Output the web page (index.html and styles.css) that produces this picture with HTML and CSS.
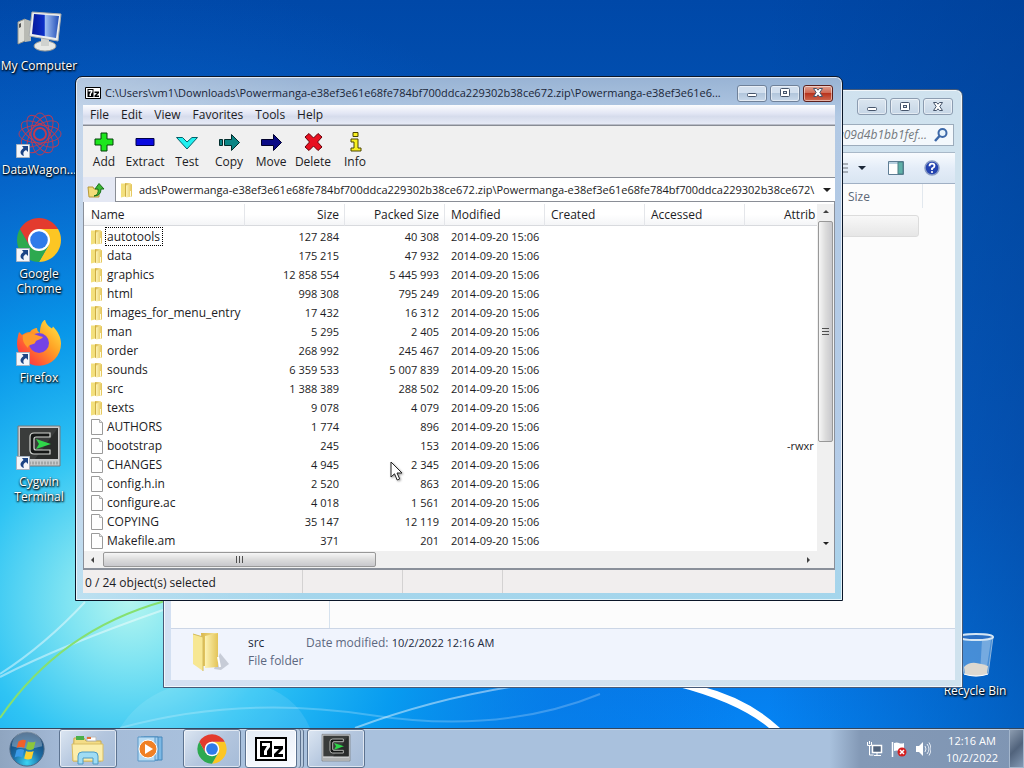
FILE: index.html
```
<!DOCTYPE html>
<html lang="en">
<head>
    <meta charset="UTF-8">
    <meta name="viewport" content="width=device-width, initial-scale=1.0">
    <title>Desktop</title>
    <link rel="stylesheet" href="styles.css">
</head>
<body>
    <!-- shared icons -->
    <svg class="defs" aria-hidden="true">
        <defs>
            <linearGradient id="gold" x1="0" x2="1"><stop offset="0" stop-color="#fdf3b4"/><stop offset="1" stop-color="#e3c458"/></linearGradient>
            <linearGradient id="gold2" x1="0" x2="1"><stop offset="0" stop-color="#d9b74c"/><stop offset="1" stop-color="#f8e9a0"/></linearGradient>
            <linearGradient id="screen" x1="0" x2="1"><stop offset="0" stop-color="#061a9c"/><stop offset=".45" stop-color="#0b2fc8"/><stop offset=".5" stop-color="#9dbcf2"/><stop offset="1" stop-color="#2450b8"/></linearGradient>
            <linearGradient id="fox" x1="1" y1="0" x2="0" y2="1"><stop offset="0" stop-color="#fff04a"/><stop offset=".4" stop-color="#ffa326"/><stop offset=".75" stop-color="#ff4f37"/><stop offset="1" stop-color="#e6256e"/></linearGradient>
            <radialGradient id="orb" cx=".5" cy=".9" r=".9"><stop offset="0" stop-color="#3ad6f4"/><stop offset=".45" stop-color="#1c6da6"/><stop offset="1" stop-color="#123a66"/></radialGradient>
            <symbol id="folder" viewBox="0 0 16 16">
                <path d="M2 1.500h4v13l-4 1z" fill="#f3e07c"/>
                <path d="M6 1h6v13H6z" fill="url(#gold2)"/>
                <path d="M7 3.500 13 2v12.500l-6 1z" fill="url(#gold)"/>
                <path d="M6.500 2v13" stroke="#c9a840" stroke-width=".8"/>
                <path d="M11.500 9v5.500" stroke="#fffbe0"/>
            </symbol>
            <symbol id="file" viewBox="0 0 16 16">
                <path d="M2.500.5h8l3 3v12h-11z" fill="#fefefe" stroke="#9a9a9a"/>
                <path d="M10.500.5v3h3" fill="#e8e8e8" stroke="#b0b0b0"/>
            </symbol>
            <symbol id="shortcut" viewBox="0 0 14 14">
                <path d="M.5.5h13v13H.5z" fill="#f4f6fa" stroke="#a9b4c2"/>
                <path d="M6 2h6v6l-2-2c-3 2-3 3-2 6C4 11 3 7 7.500 4z" fill="#1c4485"/>
            </symbol>
            <symbol id="chrome" viewBox="0 0 48 48">
                <path d="M24 13h19.050A22 22 0 0 1 24 46l9.500-16.500z" fill="#fcc624"/>
                <path d="M4.950 13A22 22 0 0 0 24 46l9.500-16.500h-19z" fill="#2da94f"/>
                <path d="M4.950 13A22 22 0 0 1 43.050 13H24l-9.500 16.500z" fill="#e33b2e"/>
                <circle cx="24" cy="24" r="11" fill="#fff"/>
                <circle cx="24" cy="24" r="8.800" fill="#2f7bea"/>
            </symbol>
            <symbol id="cygwin" viewBox="0 0 48 48">
                <path d="M3 2h42v40H3z" fill="#c9cbcc" stroke="#77797a"/>
                <path d="M5 4h38v31H5z" fill="#3a3c3b"/>
                <path d="M43 4v31H20z" fill="#2a2c2b"/>
                <path d="M35 9H19q-4 0-4 4v13q0 4 4 4h16v-4H21q-2 0-2-2v-9q0-2 2-2h14z" fill="#151716" stroke="#d4d6d2" stroke-width="1.200"/>
                <path d="M21 15l15 5-15 5 3-5z" fill="#2fd64a"/>
                <path d="M5 39h38" stroke="#a4a7a7" stroke-dasharray="2 1" stroke-width="3"/>
            </symbol>
            <symbol id="sevenzip" viewBox="0 0 32 24">
                <path d="M1 1h30v22H1z" fill="#fff" stroke="#000" stroke-width="2"/>
                <path d="M5 4h12v16H5z" fill="#000"/>
                <path d="M7 6h8v4l-3 4v4H9v-4l3-5H7z" fill="#fff"/>
                <path d="M19 9h9v3l-5 5h5v3h-9v-3l5-5h-5z" fill="#000"/>
            </symbol>
            <symbol id="min" viewBox="0 0 16 12"><rect x="3.500" y="6.500" width="9" height="3" rx="1" fill="#fff" stroke="#46556b"/></symbol>
            <symbol id="max" viewBox="0 0 16 12"><rect x="3.500" y="1.500" width="9" height="8" rx="1" fill="#fff" stroke="#46556b"/><rect x="6.500" y="4.500" width="3" height="2" fill="#dfe6ef" stroke="#46556b"/></symbol>
            <symbol id="close" viewBox="0 0 16 12"><path d="M3.500 1.500h3L8 3.200l1.500-1.700h3L9.800 5.500l2.700 4h-3L8 7.800 6.500 9.500h-3l2.700-4z" fill="#fff" stroke="#46556b"/></symbol>
        </defs>
    </svg>

    <main class="desktop">
        <svg class="wallpaper" viewBox="0 0 1024 728" preserveAspectRatio="none" aria-hidden="true">
            <defs>
                <linearGradient id="sky" x1="0" y1="0" x2="0" y2="1">
                    <stop offset="0" stop-color="#0048a8"/><stop offset=".3" stop-color="#0458ba"/><stop offset=".65" stop-color="#0863cc"/><stop offset="1" stop-color="#0584f4"/>
                </linearGradient>
                <radialGradient id="glow" gradientUnits="userSpaceOnUse" cx="130" cy="600" r="620">
                    <stop offset="0" stop-color="#b4f6f0"/><stop offset=".1" stop-color="#80e4f2"/><stop offset=".25" stop-color="#2fc4f4"/><stop offset=".45" stop-color="#08a0f0" stop-opacity=".85"/><stop offset=".7" stop-color="#0878e0" stop-opacity=".45"/><stop offset="1" stop-color="#0860d0" stop-opacity="0"/>
                </radialGradient>
                <linearGradient id="shade" x1="0" x2="1"><stop offset=".75" stop-color="#003c90" stop-opacity="0"/><stop offset="1" stop-color="#003c90" stop-opacity=".5"/></linearGradient>
            </defs>
            <path d="M0 0h1024v728H0z" fill="url(#sky)"/>
            <path d="M0 0h1024v728H0z" fill="url(#glow)"/>
            <path d="M0 0h1024v728H0z" fill="url(#shade)"/>
            <path d="M120 728Q150 680 220 680T310 728z" fill="#fff" opacity=".1"/>
            <g fill="none">
                <path d="M0 677Q60 646 163 610M0 674Q45 645 85 602" stroke="#fff" stroke-width="2" opacity=".45"/>
                <path d="M0 718Q60 630 165 601" stroke="#86e070" stroke-width="2"/>
                <path d="M120 728Q240 695 370 715T600 694" stroke="#fff" stroke-width="2" opacity=".22"/>
                <path d="M355 728Q430 700 510 687" stroke="#fff" stroke-width="2" opacity=".45"/>
            </g>
            <path d="M675 686Q738 702 769 728h11Q748 698 700 686z" fill="#fff"/>
        </svg>

        <nav class="icons">
            <a href="#" class="icon">
                <svg viewBox="0 0 48 48">
                    <g transform="translate(-3 2)">
                        <path d="M6 12l7-3v22l-7 3z" fill="#dfe0da" stroke="#92958f"/><path d="M7 14l2-1v4l-2 1z" fill="#555"/>
                        <path d="M13 9l6 2v20l-6 1z" fill="#b8bab4"/>
                        <ellipse cx="33" cy="36" rx="11" ry="5" fill="#e7e9e6" stroke="#9a9c98"/><path d="M29 28h8v8h-8z" fill="#cfd2cf"/>
                        <path d="M20 2l29 2-3 27-29-5z" fill="#eceeee" stroke="#a8acae"/>
                        <path d="M22 4l25 2-3 22-24-4z" fill="url(#screen)"/>
                    </g>
                </svg>
                <span>My Computer</span>
            </a>
            <a href="#" class="icon">
                <svg viewBox="0 0 48 48">
                    <g fill="none" stroke="#c23a50" stroke-width=".9">
                        <ellipse cx="25" cy="22" rx="21" ry="9"/><ellipse cx="25" cy="22" rx="21" ry="9" transform="rotate(30 25 22)"/><ellipse cx="25" cy="22" rx="21" ry="9" transform="rotate(60 25 22)"/><ellipse cx="25" cy="22" rx="21" ry="9" transform="rotate(90 25 22)"/><ellipse cx="25" cy="22" rx="21" ry="9" transform="rotate(120 25 22)"/><ellipse cx="25" cy="22" rx="21" ry="9" transform="rotate(150 25 22)"/>
                        <circle cx="25" cy="22" r="6" stroke-width="2"/>
                    </g>
                    <use href="#shortcut" x="1" y="32" width="14" height="14"/>
                </svg>
                <span>DataWagon...</span>
            </a>
            <a href="#" class="icon">
                <svg viewBox="0 0 48 48"><use href="#chrome" width="48" height="48"/><use href="#shortcut" x="1" y="32" width="14" height="14"/></svg>
                <span>Google Chrome</span>
            </a>
            <a href="#" class="icon">
                <svg viewBox="0 0 48 48">
                    <path d="M4 12c1 1 2 2 3 3 3-2 5-3 8-3 2-3 5-4 7-4 0 2 1 4 3 5C25 8 26 2 30-.5c1 5 4 7 7 9l1-2c5 5 8 11 8 17A22 22 0 0 1 2 24C2 19 3 16 4 12z" fill="url(#fox)"/>
                    <circle cx="24" cy="23" r="10" fill="#7542e5"/>
                    <path d="M8 15c4-2 8-2 11-1 2 1 5 2 9 3-2 3-7 2-8 6-2 2-7 1-7 5-4-4-6-8-5-13z" fill="#ff9a2a"/>
                    <use href="#shortcut" x="1" y="32" width="14" height="14"/>
                </svg>
                <span>Firefox</span>
            </a>
            <a href="#" class="icon">
                <svg viewBox="0 0 48 48"><use href="#cygwin" width="48" height="48"/><use href="#shortcut" x="1" y="32" width="14" height="14"/></svg>
                <span>Cygwin Terminal</span>
            </a>
        </nav>

        <a href="#" class="icon recycle">
            <svg viewBox="0 0 48 48">
                <path d="M8 4h34l-5 37q-12 4-24 0z" fill="#7eb2e6" fill-opacity=".55" stroke="#8fb5dc"/>
                <path d="M31 7h9l-5 33-6 1z" fill="#cfe2f4" opacity=".35"/>
                <ellipse cx="25" cy="4" rx="17" ry="3" fill="#2a6fc4" stroke="#d5e6f4" stroke-width="2"/>
                <path d="M13 34q5-5 12-4t12 3l-1 8q-11 4-22 0z" fill="#dcd8d0"/>
                <path d="M13 41q12 4 24 0" stroke="#fff" fill="none"/>
            </svg>
            <span>Recycle Bin</span>
        </a>

        <!-- explorer, in the background -->
        <section class="window explorer">
            <header class="titlebar">
                <div class="controls">
                    <button aria-label="Minimize"><svg><use href="#min"/></svg></button>
                    <button aria-label="Maximize"><svg><use href="#max"/></svg></button>
                    <button aria-label="Close"><svg><use href="#close"/></svg></button>
                </div>
            </header>
            <div class="search-row">
                <label class="search">
                    <input type="text" value="a09d4b1bb1fef..." aria-label="Search">
                    <svg viewBox="0 0 16 16"><circle cx="9.500" cy="6" r="4" fill="#e8f4fc" stroke="#3c68a8" stroke-width="2"/><path d="M6.500 9 2 14" stroke="#3c68a8" stroke-width="2.500"/></svg>
                </label>
            </div>
            <div class="commands">
                <button aria-label="Change your view"><svg class="view" viewBox="0 0 28 16"><path d="M0 4h8M0 8h8M0 12h8" stroke="#6a7078"/><path d="M18 6h8l-4 4z" fill="#1c2838"/></svg></button>
                <button aria-label="Show the preview pane"><svg viewBox="0 0 16 16"><path d="M.5 1.500h15v13H.5z" fill="#fff" stroke="#5f7d94"/><path d="M1 2h14v2H1z" fill="#b8d0e0"/><path d="M10 2h5v12h-5z" fill="#5fb0a8" stroke="#4c7c84"/></svg></button>
                <button aria-label="Get help"><svg viewBox="0 0 16 16"><circle cx="8" cy="8" r="7" fill="#2443b0" stroke="#8a9cc4" stroke-width="1.500"/><path d="M5.500 6.200q0-2.500 2.500-2.500t2.500 2.200Q10.500 7.300 8 8.500v1.500" fill="none" stroke="#fff" stroke-width="1.800"/><circle cx="8" cy="12" r="1.100" fill="#fff"/></svg></button>
            </div>
            <div class="panes">
                <div class="tree"></div>
                <div class="files">
                    <div class="files-head"><span>Size</span></div>
                    <div class="files-row"></div>
                </div>
            </div>
            <footer class="details">
                <svg viewBox="0 0 48 48">
                    <path d="M30 40l6-16 9 11-8 6z" fill="#6a7080" opacity=".3"/>
                    <path d="M17 4h17v33H19z" fill="url(#gold2)"/><path d="M21 7l13-3v34l-13 1z" fill="url(#gold)"/>
                    <path d="M9 5 19 8v34L9 35z" fill="#f7e793"/><path d="M9 5l10 3v34" fill="none" stroke="#d4bc5c"/><path d="M34 28l2 10" stroke="#fff" stroke-width="2"/>
                </svg>
                <div class="details-name"><strong>src</strong><span>File folder</span></div>
                <p>Date modified: <b>10/2/2022 12:16 AM</b></p>
            </footer>
        </section>

        <!-- 7-zip file manager -->
        <section class="window seven">
            <header class="titlebar">
                <svg class="app" viewBox="0 0 32 24"><use href="#sevenzip"/></svg>
                <h1>C:\Users\vm1\Downloads\Powermanga-e38ef3e61e68fe784bf700ddca229302b38ce672.zip\Powermanga-e38ef3e61e6...</h1>
                <div class="controls">
                    <button aria-label="Minimize"><svg><use href="#min"/></svg></button>
                    <button aria-label="Maximize"><svg><use href="#max"/></svg></button>
                    <button class="close" aria-label="Close"><svg><use href="#close"/></svg></button>
                </div>
            </header>
            <nav class="menu">
                <button>File</button><button>Edit</button><button>View</button><button>Favorites</button><button>Tools</button><button>Help</button>
            </nav>
            <div class="toolbar">
                <button><svg viewBox="0 0 24 20"><path d="M9 1h6v6h6v6h-6v6H9v-6H3V7h6z" fill="#1de61d" stroke="#05400a"/></svg>Add</button>
                <button><svg viewBox="0 0 24 20"><path d="M3 6.500h18v7H3z" fill="#0a0ae0" stroke="#00004a"/></svg>Extract</button>
                <button><svg viewBox="0 0 24 20"><path d="M1.500 5.500h6L12 10l5-4.500h5.500L12 17z" fill="#20f0f0" stroke="#046068"/></svg>Test</button>
                <button><svg viewBox="0 0 24 20"><path d="M2.500 7.500h3v6h-3zM7.500 7.500h7v-5l8 8-8 8v-5h-7z" fill="#0b8585" stroke="#022c2c"/></svg>Copy</button>
                <button><svg viewBox="0 0 24 20"><path d="M2.500 7.500h12v-5l8 8-8 8v-5h-12z" fill="#0a0a86" stroke="#00002c"/></svg>Move</button>
                <button><svg viewBox="0 0 24 20"><path d="M4 5l4-3.500L12.500 6 17 1.500 21 5l-4.500 5L21 15l-4 3.500-4.500-4.500L8 18.500 4 15l4.500-5z" fill="#e81020" stroke="#640008"/></svg>Delete</button>
                <button><svg viewBox="0 0 24 20"><path d="M10 .5h5v4h-5zM8 7h7v9h3v3H8v-3h3v-6H8z" fill="#f8f020" stroke="#4a4400"/></svg>Info</button>
            </div>
            <div class="path">
                <button class="up" aria-label="Up One Level"><svg viewBox="0 0 18 16"><path d="M1 5h5l1 2h5v8H2z" fill="#f2dc78" stroke="#b89838"/><path d="M7 14q5-1 4-7H8l4-5.500L17 7h-3q0 7-7 7z" fill="#3cb834" stroke="#187018"/></svg></button>
                <div class="combo">
                    <svg viewBox="0 0 16 16"><use href="#folder"/></svg>
                    <input type="text" aria-label="Folder" value="ads\Powermanga-e38ef3e61e68fe784bf700ddca229302b38ce672.zip\Powermanga-e38ef3e61e68fe784bf700ddca229302b38ce672\">
                    <button class="arrow down" aria-label="Show history"></button>
                </div>
            </div>
            <div class="list">
                <div class="view-area">
                    <table>
                        <thead>
                            <tr><th class="name">Name</th><th class="num">Size</th><th class="num">Packed Size</th><th>Modified</th><th>Created</th><th>Accessed</th><th class="attr">Attrib</th></tr>
                        </thead>
                        <tbody>
                            <tr><td><svg><use href="#folder"/></svg><span class="focused">autotools</span></td><td>127 284</td><td>40 308</td><td>2014-09-20 15:06</td><td></td><td></td><td></td></tr>
                            <tr><td><svg><use href="#folder"/></svg><span>data</span></td><td>175 215</td><td>47 932</td><td>2014-09-20 15:06</td><td></td><td></td><td></td></tr>
                            <tr><td><svg><use href="#folder"/></svg><span>graphics</span></td><td>12 858 554</td><td>5 445 993</td><td>2014-09-20 15:06</td><td></td><td></td><td></td></tr>
                            <tr><td><svg><use href="#folder"/></svg><span>html</span></td><td>998 308</td><td>795 249</td><td>2014-09-20 15:06</td><td></td><td></td><td></td></tr>
                            <tr><td><svg><use href="#folder"/></svg><span>images_for_menu_entry</span></td><td>17 432</td><td>16 312</td><td>2014-09-20 15:06</td><td></td><td></td><td></td></tr>
                            <tr><td><svg><use href="#folder"/></svg><span>man</span></td><td>5 295</td><td>2 405</td><td>2014-09-20 15:06</td><td></td><td></td><td></td></tr>
                            <tr><td><svg><use href="#folder"/></svg><span>order</span></td><td>268 992</td><td>245 467</td><td>2014-09-20 15:06</td><td></td><td></td><td></td></tr>
                            <tr><td><svg><use href="#folder"/></svg><span>sounds</span></td><td>6 359 533</td><td>5 007 839</td><td>2014-09-20 15:06</td><td></td><td></td><td></td></tr>
                            <tr><td><svg><use href="#folder"/></svg><span>src</span></td><td>1 388 389</td><td>288 502</td><td>2014-09-20 15:06</td><td></td><td></td><td></td></tr>
                            <tr><td><svg><use href="#folder"/></svg><span>texts</span></td><td>9 078</td><td>4 079</td><td>2014-09-20 15:06</td><td></td><td></td><td></td></tr>
                            <tr><td><svg><use href="#file"/></svg><span>AUTHORS</span></td><td>1 774</td><td>896</td><td>2014-09-20 15:06</td><td></td><td></td><td></td></tr>
                            <tr><td><svg><use href="#file"/></svg><span>bootstrap</span></td><td>245</td><td>153</td><td>2014-09-20 15:06</td><td></td><td></td><td>-rwxr</td></tr>
                            <tr><td><svg><use href="#file"/></svg><span>CHANGES</span></td><td>4 945</td><td>2 345</td><td>2014-09-20 15:06</td><td></td><td></td><td></td></tr>
                            <tr><td><svg><use href="#file"/></svg><span>config.h.in</span></td><td>2 520</td><td>863</td><td>2014-09-20 15:06</td><td></td><td></td><td></td></tr>
                            <tr><td><svg><use href="#file"/></svg><span>configure.ac</span></td><td>4 018</td><td>1 561</td><td>2014-09-20 15:06</td><td></td><td></td><td></td></tr>
                            <tr><td><svg><use href="#file"/></svg><span>COPYING</span></td><td>35 147</td><td>12 119</td><td>2014-09-20 15:06</td><td></td><td></td><td></td></tr>
                            <tr><td><svg><use href="#file"/></svg><span>Makefile.am</span></td><td>371</td><td>201</td><td>2014-09-20 15:06</td><td></td><td></td><td></td></tr>
                        </tbody>
                    </table>
                </div>
                <div class="vscroll"><i class="arrow up-arrow"></i><div class="thumb"></div><i class="arrow down end"></i></div>
                <div class="hscroll"><i class="arrow left"></i><div class="thumb"></div><i class="arrow right end"></i></div>
                <div class="corner"></div>
            </div>
            <footer class="status"><span>0 / 24 object(s) selected</span><span></span><span></span><span></span></footer>
        </section>

        <svg class="cursor" viewBox="0 0 14 20" aria-hidden="true"><path d="M1 1v15l3.500-3.200L7.200 19l2.500-1.100L7 12h5z" fill="#fff" stroke="#222"/></svg>
    </main>

    <footer class="taskbar">
        <button class="start" aria-label="Start">
            <svg viewBox="0 0 40 40">
                <circle cx="20" cy="20" r="18" fill="url(#orb)" stroke="#4a6480"/>
                <path d="M4 17a16 16 0 0 1 32 0q-16 5-32 0z" fill="#fff" opacity=".3"/>
                <path d="M11 12q4-3 8-1l-2 8q-4-2-8 0z" fill="#f0602a"/><path d="M21 12q4 2 8 0l-2 8q-4 2-8 0z" fill="#8cc63c"/>
                <path d="M9 21q4-2 8 0l-2 8q-4-2-8 0z" fill="#3a9ae8"/><path d="M19 22q4 2 8 0l-2 8q-4 2-8 0z" fill="#fcd030"/>
            </svg>
        </button>
        <button class="task open" aria-label="Windows Explorer">
            <svg viewBox="0 0 36 32">
                <path d="M4 5h10l2 3h15v20H3z" fill="#f3dc86" stroke="#c9a94c"/><path d="M6 3h8v4H6z" fill="#4ab04a"/><path d="M17 4h9v4h-9z" fill="#fff" stroke="#bbb"/><path d="M17 4h4v2h-4z" fill="#e0703a"/>
                <path d="M2 11h31v17H3z" fill="#fbedab" stroke="#d9bd63"/>
                <path d="M8 31V23q0-4 4-4h12q4 0 4 4v8h-5v-6H13v6z" fill="#9fdcf4" stroke="#4c9ac4"/>
            </svg>
        </button>
        <button class="task" aria-label="Windows Media Player">
            <svg viewBox="0 0 36 32"><path d="M12 4h18v23H12z" fill="#7cb8e4" stroke="#4688bc"/><path d="M9 4h17v23H9z" fill="#a4d0f0" stroke="#4688bc"/><path d="M6 4h17v24H6z" fill="#b8dcf4" stroke="#5a98c8"/><circle cx="16" cy="16" r="9" fill="#f08024" stroke="#fff"/><path d="M13 11l8 5-8 5z" fill="#fff"/></svg>
        </button>
        <button class="task open" aria-label="Google Chrome"><svg viewBox="0 0 48 48"><use href="#chrome"/></svg></button>
        <button class="task open active stacked" aria-label="7-Zip File Manager"><svg viewBox="0 0 32 24"><use href="#sevenzip"/></svg></button>
        <button class="task open" aria-label="Cygwin Terminal"><svg viewBox="0 0 48 48"><use href="#cygwin"/></svg></button>

        <div class="tray">
            <button aria-label="Network"><svg viewBox="0 0 16 16"><path d="M5.500 4.500h9v7h-9z" fill="#51637c" stroke="#fff" stroke-width="1.500"/><path d="M10 12v2M7 14.500h7M2.500 5v9h4M.5 1v3.500h4V1M2.500 0v3" fill="none" stroke="#fff"/></svg></button>
            <button aria-label="Action Center"><svg viewBox="0 0 16 16"><path d="M1.500 1v15" stroke="#fff" stroke-width="1.500"/><path d="M3 2q3-1 5 0t5 0v8q-3 1-5 0t-5 0z" fill="#fff"/><circle cx="11" cy="11" r="4.500" fill="#d42020"/><path d="M9 9l4 4m0-4l-4 4" stroke="#fff" stroke-width="1.500"/></svg></button>
            <button aria-label="Volume"><svg viewBox="0 0 16 16"><path d="M1 5h3l4-4v14l-4-4H1z" fill="#fff"/><path d="M10 5q2 3 0 6M12 3q4 5 0 10M14 1.500q4 6.500 0 13" fill="none" stroke="#e8eef6"/></svg></button>
        </div>
        <button class="clock"><span>12:16 AM</span><span>10/2/2022</span></button>
        <button class="peek" aria-label="Show desktop"></button>
    </footer>
</body>
</html>
```
FILE: styles.css
```
* {
    box-sizing: border-box;
}
body {
    font-family: 'Open Sans', 'Noto Sans', sans-serif;
    font-size: 12px;
    line-height: 16px;
    color: #1c1c24;
    margin: 0;
    height: 100vh;
    display: flex;
    flex-direction: column;
    overflow: hidden;
}
button, input {
    font: inherit;
    color: inherit;
    margin: 0;
    padding: 0;
    border: none;
    background: none;
}
button:focus, input:focus { outline: none; }
.defs {
    position: absolute;
    width: 0;
    height: 0;
}

/* desktop */
.desktop {
    position: relative;
    flex: 1;
    min-height: 0;
    overflow: hidden;
}
.wallpaper {
    position: absolute;
    width: 100%;
    height: 100%;
}
.icons {
    position: absolute;
    left: 1px;
    top: 8px;
    display: grid;
    grid-auto-rows: 104px;
}
.icon {
    display: flex;
    flex-direction: column;
    align-items: center;
    gap: 2px;
    width: 76px;
    color: white;
    line-height: 15px;
    text-align: center;
    text-decoration: none;
    text-shadow: 0 1px 2px black, 1px 1px 2px black;
}
.icon svg {
    width: 48px;
    height: 48px;
}
.icon span { padding: 0 8px; }
.icons .icon:nth-child(-n+2) span { padding: 0; white-space: nowrap; }
.recycle {
    position: absolute;
    right: 11px;
    bottom: 30px;
}
.recycle span { padding: 0; white-space: nowrap; }

/* windows */
.window {
    position: absolute;
    display: flex;
    flex-direction: column;
    border: 1px solid #14243c;
    border-radius: 7px 7px 0 0;
    box-shadow: inset 0 0 0 1px rgba(255, 255, 255, 0.7);
}
.controls {
    display: flex;
    gap: 3px;
}
.controls button {
    display: flex;
    align-items: center;
    justify-content: center;
    width: 30px;
    height: 17px;
    border: 1px solid #6f8199;
    border-radius: 3px;
    background: linear-gradient(#d2dfee 45%, #b2c6dc 50%, #c8d8ea);
    box-shadow: inset 0 0 0 1px rgba(255, 255, 255, 0.5);
}
.controls svg {
    width: 16px;
    height: 12px;
}
.controls .close {
    border-color: #5c1f1c;
    background: linear-gradient(#e0a090 0%, #cf6a55 45%, #b8331e 50%, #d06a50);
}

.explorer {
    left: 163px;
    right: 61px;
    top: 89px;
    bottom: 40px;
    padding: 0 7px 7px;
    border-color: #465a78;
    background: linear-gradient(90deg, #d3e0f2, #cfe2ee);
}
.explorer .titlebar {
    display: flex;
    justify-content: flex-end;
    padding: 8px 2px 9px;
}
.explorer .controls button {
    background: linear-gradient(#dbe6f0, #c6d6e6);
    border-color: #8c9cb0;
}
.search-row {
    display: flex;
    justify-content: flex-end;
    padding: 0 1px 6px;
}
.search {
    display: flex;
    align-items: center;
    gap: 6px;
    width: 240px;
    height: 22px;
    padding-right: 4px;
    border: 1px solid #9cacbc;
    background: #f3f8fc;
}
.search input {
    flex: 1;
    min-width: 0;
    text-align: right;
    font-style: italic;
    color: #74787e;
}
.search svg {
    width: 16px;
    height: 16px;
}
.commands {
    display: flex;
    align-items: center;
    justify-content: flex-end;
    gap: 20px;
    height: 32px;
    padding-right: 15px;
    border-top: 1px solid #a8b8c8;
    border-bottom: 1px solid #a0b0c4;
    background: linear-gradient(#f8fbfe, #e4edf8 50%, #d9e5f2);
}
.commands svg {
    display: block;
    width: 16px;
    height: 16px;
}
.commands .view { width: 28px; }
.panes {
    display: flex;
    flex: 1;
    background: #fcfcfc;
}
.tree {
    width: 159px;
    border-right: 1px solid #d6e2ee;
}
.files {
    flex: 1;
    padding-right: 32px;
}
.files-head {
    display: flex;
    justify-content: flex-end;
    height: 24px;
    line-height: 26px;
    color: #5c6878;
    border-right: 1px solid #e2e8ee;
}
.files-head span { width: 74px; }
.files-row {
    height: 22px;
    margin: 7px 4px 0 0;
    border: 1px solid #dcdcdc;
    border-radius: 3px;
    background: linear-gradient(#f8f8f8, #e6e6e6);
}
.details {
    display: flex;
    gap: 16px;
    height: 52px;
    padding: 0 13px;
    border-top: 1px solid #ccd6e6;
    background: #f0f4fd;
    color: #5c6880;
    line-height: 18px;
}
.details svg {
    width: 48px;
    height: 48px;
}
.details-name {
    display: flex;
    flex-direction: column;
    width: 42px;
    padding-top: 5px;
    white-space: nowrap;
}
.details strong, .details b {
    font-weight: normal;
    color: #20283c;
}
.details b { font-size: 11px; }
.details p {
    margin: 0;
    padding-top: 5px;
}

.seven {
    left: 75px;
    right: 181px;
    top: 76px;
    bottom: 127px;
    padding: 0 7px 7px;
    border-color: #0a1628;
    background: linear-gradient(90deg, rgba(255, 255, 255, 0.25), transparent 30%), linear-gradient(#98b3d4, #b2c9e4 40px, #b4cce8 80%, #a4d6ec);
}
.seven .titlebar {
    display: flex;
    align-items: center;
    gap: 4px;
    height: 28px;
    padding: 4px 2px 0;
}
.app {
    width: 16px;
    height: 12px;
}
h1 {
    flex: 1;
    min-width: 0;
    margin: 0;
    font-size: 11px;
    font-weight: normal;
    white-space: nowrap;
    color: #1a2638;
}
.menu {
    display: flex;
    height: 20px;
    padding-left: 1px;
    background: linear-gradient(#fbfcfe, #e2e6f4 45%, #d6dcec 60%, #e6eaf6);
    border-bottom: 1px solid #b8bcc8;
}
.menu button { padding: 0 6px; }
.toolbar {
    display: flex;
    height: 52px;
    padding: 6px 0 0 1px;
    border-top: 1px solid #888c94;
    background: #f0f0f0;
}
.toolbar button {
    display: flex;
    flex-direction: column;
    align-items: center;
    gap: 2px;
    width: 42px;
}
.toolbar button:first-child { width: 40px; }
.toolbar svg {
    width: 24px;
    height: 20px;
}
.path {
    display: flex;
    height: 25px;
    background: #e4e8f4;
}
.up {
    width: 32px;
    padding-right: 6px;
}
.up svg {
    width: 18px;
    height: 16px;
    vertical-align: middle;
}
.combo {
    display: flex;
    align-items: center;
    flex: 1;
    min-width: 0;
    padding: 0 4px 0 3px;
    gap: 4px;
    border: 1px solid #8a8e96;
    border-right: none;
    background: white;
}
.combo svg {
    width: 16px;
    height: 16px;
}
.combo input {
    flex: 1;
    min-width: 0;
    font-size: 11px;
}
.arrow {
    display: block;
    width: 0;
    height: 0;
    border: 4px solid transparent;
}
.arrow.down { border-top-color: #202020; border-bottom-width: 0; }
.vscroll .arrow, .hscroll .arrow { border-width: 3px; }
.vscroll .up-arrow { border-bottom-color: #404040; border-top-width: 0; }
.vscroll .down { border-bottom-width: 0; }
.hscroll .left { border-right-color: #404040; border-left-width: 0; }
.hscroll .right { border-left-color: #404040; border-right-width: 0; }

/* file list */
.list {
    flex: 1;
    min-height: 0;
    display: grid;
    grid-template: minmax(0, 1fr) 17px / minmax(0, 1fr) 17px;
    padding-top: 2px;
    border-left: 1px solid #8a909a;
    border-right: 1px solid #8a909a;
    border-bottom: 2px solid #8a909a;
    background: white;
}
.view-area { overflow: hidden; }
table {
    table-layout: fixed;
    width: 100%;
    border-collapse: separate;
    border-spacing: 0;
}
th {
    width: 100px;
    height: 22px;
    padding: 0 5px 0 6px;
    font-weight: normal;
    text-align: left;
    white-space: nowrap;
    border-right: 1px solid #e4e6ea;
    border-bottom: 1px solid #d8dade;
    background: linear-gradient(white 50%, #f4f5f7);
}
th.name { width: 161px; padding-left: 7px; }
th.num { text-align: right; }
th.attr { width: auto; padding: 0 0 0 39px; border-right: none; }
td {
    height: 19px;
    padding: 0 6px;
    font-size: 11px;
    line-height: 19px;
    white-space: nowrap;
}
tbody tr:first-child td {
    height: 20px;
    padding-top: 1px;
}
td:nth-child(1) {
    display: flex;
    align-items: center;
    padding: 0 0 0 5px;
    font-size: 12px;
}
td:nth-child(2), td:nth-child(3) { text-align: right; }
td:nth-child(7) { padding: 0 0 0 42px; }
td svg {
    flex: none;
    width: 16px;
    height: 16px;
}
td span {
    padding: 0 1px;
    line-height: 17px;
    border: 1px solid transparent;
}
td .focused {
    padding-right: 2px;
    border: 1px dotted black;
}
.vscroll, .hscroll, .corner { background: #f0f0f0; }
.vscroll, .hscroll {
    display: flex;
    align-items: center;
}
.vscroll {
    flex-direction: column;
    padding: 6px 0;
    gap: 8px;
}
.hscroll {
    grid-column: 1;
    padding: 0 7px;
    gap: 9px;
}
.end { margin-top: auto; }
.hscroll .end { margin: 0 0 0 auto; }
.thumb {
    display: flex;
    border: 1px solid #989898;
    border-radius: 2px;
}
.thumb::after {
    content: '';
    margin: auto;
}
.vscroll .thumb {
    width: 15px;
    height: 66%;
    background: linear-gradient(90deg, #f6f6f6, #dcdcdc 50%, #c8c8cc);
}
.vscroll .thumb::after {
    width: 7px;
    height: 7px;
    background: repeating-linear-gradient(#505050 0 1px, transparent 1px 3px);
}
.hscroll .thumb {
    width: 38%;
    height: 15px;
    background: linear-gradient(#f6f6f6, #dcdcdc 50%, #c8c8cc);
}
.hscroll .thumb::after {
    width: 8px;
    height: 7px;
    background: repeating-linear-gradient(90deg, #505050 0 1px, transparent 1px 3px);
}
.status {
    display: flex;
    height: 23px;
    line-height: 25px;
    background: #f1eeee;
}
.status span {
    width: 100px;
    border-right: 1px solid #d4d2d2;
}
.status span:first-child { width: 220px; padding-left: 2px; }
.status span:last-child { border: none; }
.cursor {
    position: absolute;
    left: 390px;
    top: 461px;
    width: 14px;
    height: 20px;
    filter: drop-shadow(1px 1px 1px rgba(0, 0, 0, 0.4));
}

/* taskbar */
.taskbar {
    display: flex;
    align-items: stretch;
    height: 40px;
    gap: 4px;
    border-top: 1px solid #33465e;
    background: linear-gradient(90deg, #8fa5c0, #a3b9d6 60px, #a9c1dd 20%, #a9c1dd 81%, #8399b6 84%, #7f95b3);
    box-shadow: inset 0 1px 0 #c4d4e6;
}
.start {
    width: 55px;
    padding-left: 3px;
}
.start svg {
    display: block;
    width: 48px;
    height: 38px;
}
.task {
    display: flex;
    align-items: center;
    justify-content: center;
    width: 58px;
    border: 1px solid transparent;
    border-radius: 3px;
}
.task svg {
    width: 36px;
    height: 32px;
}
.open {
    border-color: #5d7390;
    background: linear-gradient(135deg, #dce6f2, #b4c6de 50%, #a6bcd8);
    box-shadow: inset 0 0 0 1px rgba(255, 255, 255, 0.6);
}
.active {
    width: 52px;
    background: linear-gradient(160deg, #e4ecf6, #fafcff);
}
.active svg {
    width: 32px;
    height: 24px;
}
.stacked {
    margin-right: 6px;
    box-shadow: inset 0 0 0 1px white, 3px 0 0 #b8cade, 4px 0 0 #5d7390, 6px 0 0 #b8cade, 7px 0 0 #5d7390;
}
.tray {
    display: flex;
    align-items: center;
    gap: 8px;
    margin-left: auto;
}
.tray svg {
    display: block;
    width: 16px;
    height: 16px;
}
.clock {
    display: flex;
    flex-direction: column;
    justify-content: center;
    width: 74px;
    margin-right: -4px;
    font-size: 11px;
    line-height: 17px;
    color: white;
    text-align: center;
}
.peek {
    width: 15px;
    border: 1px solid #a4b6cc;
    background: linear-gradient(135deg, #8c9cb0, #51637c 50%, #8499b4);
}
```
